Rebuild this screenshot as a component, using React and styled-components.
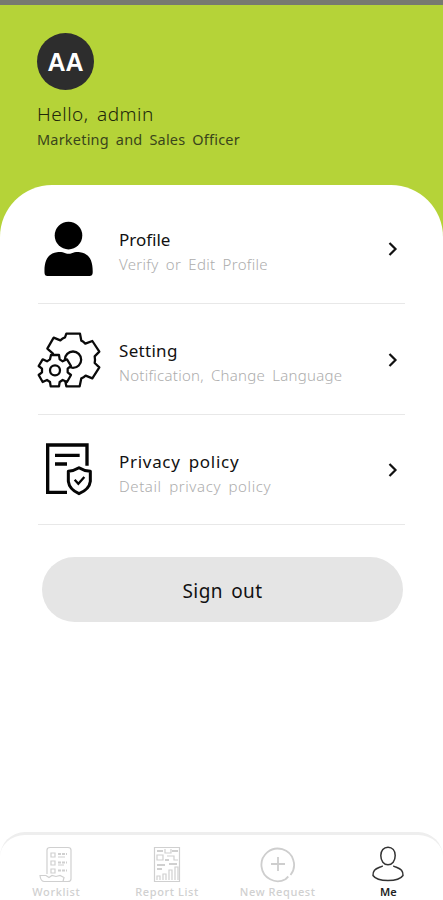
import React from "react"
import styled, { createGlobalStyle } from "styled-components"

const GlobalStyle = createGlobalStyle`
  * {
    box-sizing: border-box;
  }
  body {
    margin: 0;
    background: #fff;
    font-family: "Noto Sans", "Open Sans", sans-serif;
  }
`

const Screen = styled.div`
  width: 100%;
  height: 900px;
  display: flex;
  flex-direction: column;
  overflow: hidden;
  background: #fff;
`

const Header = styled.header`
  height: 237px;
  flex-shrink: 0;
  padding: 28px 37px 0;
  border-top: 5px solid #777a70;
  background: #b5d338;
`

const Avatar = styled.div`
  width: 57px;
  height: 57px;
  display: flex;
  align-items: center;
  justify-content: center;
  border-radius: 50%;
  background: #2d2d2d;
  color: #fff;
  font: bold 25px "Liberation Sans", sans-serif;
  line-height: 1;
  padding-top: 2px;
`

const Text = styled.p`
  margin: 0;
  white-space: nowrap;
  color: ${(props) => props.$color || "#111"};
  font-size: ${(props) => props.$size}px;
  line-height: ${(props) => props.$line}px;
  font-weight: ${(props) => props.$weight || 400};
  letter-spacing: ${(props) => props.$spacing || 0}px;
  word-spacing: ${(props) => props.$word || 0}px;
`

const Greeting = styled.div`
  padding: 10px 0 0;
`

const Card = styled.main`
  flex: 1;
  margin-top: -52px;
  padding: 8px 38px 0;
  border-radius: 52px 52px 0 0;
  background: #fff;
`

const Row = styled.div`
  height: 110.8px;
  display: flex;
  align-items: center;
  padding-top: 2px;
  border-bottom: 1.5px solid #e8e8e8;
`

const RowIcon = styled.div`
  width: 81px;
  display: flex;
  svg {
    display: block;
    margin-left: -1px;
  }
`

const RowText = styled.div`
  flex: 1;
  padding-top: 6px;
`

const Chevron = styled.svg`
  display: block;
  margin-right: 6px;
`

const SignOut = styled.button`
  width: calc(100% - 6px);
  height: 65px;
  display: flex;
  align-items: center;
  justify-content: center;
  margin: 32px 2px 0 4px;
  padding: 2px 0 0;
  border: 0;
  border-radius: 33px;
  background: #e5e5e5;
  font-family: inherit;
`

const NavBar = styled.nav`
  height: 68px;
  flex-shrink: 0;
  display: grid;
  grid-template-columns: repeat(4, 110.7px);
  padding-left: 1px;
  border-top: 3px solid #eee;
  border-radius: 25px 25px 0 0;
`

const NavItem = styled.div`
  display: flex;
  flex-direction: column;
  align-items: center;
  padding-top: 11px;
  svg {
    display: block;
    margin-bottom: 1px;
  }
`

const ProfileIcon = () => (
  <svg width="64" height="58" viewBox="0 0 64 58">
    <circle cx="31.5" cy="15.6" r="13.8" />
    <path d="M7.5 52.5c-.4-11.500 3-19 12.500-20.300 3.500-.5 6 .1 8.500 1 2.200.8 4 .8 6.200 0 2.600-.9 5-1.500 8.300-1 9.500 1.300 13 8.800 12.700 20.300 0 2.500-1.200 3.500-3.200 3.500h-42c-2 0-3-1-3-3.500z" />
  </svg>
)

const SettingIcon = () => (
  <svg width="64" height="58" viewBox="20 32 192 174" fill="none" stroke="#0a0a0a" strokeWidth="6.800" strokeLinejoin="round">
    <path d="M108 40h41l4 21q6 2 12 9l21-8 21 32-14 14q2 10 0 20l14 13-21 33-20-8q-6 6-13 8l-5 24h-40l-4-20-28-60-10-10 2-8-17-15 19-33 20 8q7-7 14-9z" />
    <circle cx="128" cy="118" r="24.500" />
    <path fill="#fff" d="M62 104h24l2 13 9 6 13-6 12 20-10 8v11l10 8-12 21-13-6-9 6-2 13H61l-2-13-9-6-13 6-12-21 10-8v-11l-10-8 12-20 13 6 9-6z" />
    <circle cx="74" cy="150" r="15" />
  </svg>
)

const PolicyIcon = () => (
  <svg width="64" height="58" viewBox="21 34 192 174" fill="none" stroke="#050505" strokeWidth="10">
    <path d="M111 188H53V46h118v62M75 77h74M75 103h36" />
    <path strokeWidth="9" strokeLinejoin="round" d="M147 114q14 9 34 11v30q-3 24-34 37-29-13-32-37v-30q17-2 32-11z" />
    <path strokeWidth="7" d="M134 150l11 12 18-20" />
  </svg>
)

const WorklistIcon = () => (
  <svg width="34" height="37" viewBox="0 0 34 37" fill="none" stroke="#d0d0d0" strokeWidth="1.200">
    <path d="M8 28V4q0-2.500 3-2.500h18q3 0 3 2.500v29q0 2.500-3 2.500H5q-3.500-.5-4-6h6l3 2 3-2 4 1 4-1 4 2-1 4" />
    <path d="M12 7h4v4h-4zM12 15h4v4h-4zM12 23h4v4h-4z" />
    <path strokeWidth="2" strokeDasharray="3 1" d="M19 8h9M19 16.500h9M19 24.500h9" />
    <path d="M19 11h7M19 19h6" />
  </svg>
)

const ReportIcon = () => (
  <svg width="28" height="37" viewBox="0 0 28 37" fill="none" stroke="#d0d0d0" strokeWidth="1.200">
    <path d="M1.500 1.500h25v34h-25z" />
    <path d="M4 9h6v5H4zM12 3v4h6V3M14 10h7v4h4" />
    <path strokeWidth="2" d="M4 5h6M19 5h6M12 14h4M4 19h8M4 23h5M16 18h8" />
    <path d="M4 34v-4h3v4M10 34v-6h3v6M16 34V24h3v10M22 34V21h3v13" />
  </svg>
)

const RequestIcon = () => (
  <svg width="36" height="37" viewBox="0 0 36 37" fill="none" stroke="#cecece" strokeWidth="1.800">
    <path d="M30.500 29A16.300 16.300 0 1 0 25.500 33.200l2.800-2.700M18 11v14M11 18h14" />
  </svg>
)

const MeIcon = () => (
  <svg width="34" height="37" viewBox="0 0 34 37" fill="none" stroke="#333" strokeWidth="1.500">
    <path d="M17 1.200c4.300 0 7.200 3.300 7.200 8.300 0 5.500-3 9.200-7.200 9.200s-7.200-3.700-7.200-9.200c0-5 2.900-8.300 7.200-8.300z" />
    <path d="M11.800 19.800c-3.300 1.700-6.300 2.200-8.300 4.400-1.200 1.500-1.700 3.400-1.500 5.300C6.500 36.200 27.500 36.200 32 29.500c.2-1.900-.3-3.800-1.500-5.300-2-2.200-5-2.700-8.300-4.400" />
  </svg>
)

const menu = [
  { title: "Profile", detail: "Verify or Edit Profile", icon: ProfileIcon, titleSpacing: 0, spacing: 0.3 },
  { title: "Setting", detail: "Notification, Change Language", icon: SettingIcon, titleSpacing: 0.3, spacing: 0.26 },
  { title: "Privacy policy", detail: "Detail privacy policy", icon: PolicyIcon, titleSpacing: 0.7, spacing: 0.6 }
]

const tabs = [
  { label: "Worklist", icon: WorklistIcon },
  { label: "Report List", icon: ReportIcon },
  { label: "New Request", icon: RequestIcon },
  { label: "Me", icon: MeIcon, active: true }
]

const App = () => {
  return (
    <Screen>
      <GlobalStyle />
      <Header>
        <Avatar>AA</Avatar>
        <Greeting>
          <Text $size={19} $line={28} $weight={300} $spacing={0.5} $word={3} $color="#20260a">
            Hello, admin
          </Text>
          <Text $size={14.5} $line={23} $spacing={0.2} $word={3} $color="#3a451b">
            Marketing and Sales Officer
          </Text>
        </Greeting>
      </Header>
      <Card>
        {menu.map((item) => (
          <Row key={item.title}>
            <RowIcon>
              <item.icon />
            </RowIcon>
            <RowText>
              <Text $size={17} $line={25} $spacing={item.titleSpacing} $word={3}>
                {item.title}
              </Text>
              <Text $size={15} $line={24} $weight={300} $spacing={item.spacing} $word={3} $color="#adadad">
                {item.detail}
              </Text>
            </RowText>
            <Chevron width="12" height="16" viewBox="0 0 12 16" fill="none" stroke="#111" strokeWidth="2.200">
              <path d="M2.500 2l6 6-6 6" />
            </Chevron>
          </Row>
        ))}
        <SignOut>
          <Text as="span" $size={19} $line={28} $spacing={0.4} $word={3}>
            Sign out
          </Text>
        </SignOut>
      </Card>
      <NavBar>
        {tabs.map((tab) => (
          <NavItem key={tab.label}>
            <tab.icon />
            <Text as="span" $size={11} $line={15} $weight={tab.active ? 600 : 500} $spacing={tab.active ? 0 : 0.6} $color={tab.active ? "#222" : "#d0d0d0"}>
              {tab.label}
            </Text>
          </NavItem>
        ))}
      </NavBar>
    </Screen>
  )
}

export default App
